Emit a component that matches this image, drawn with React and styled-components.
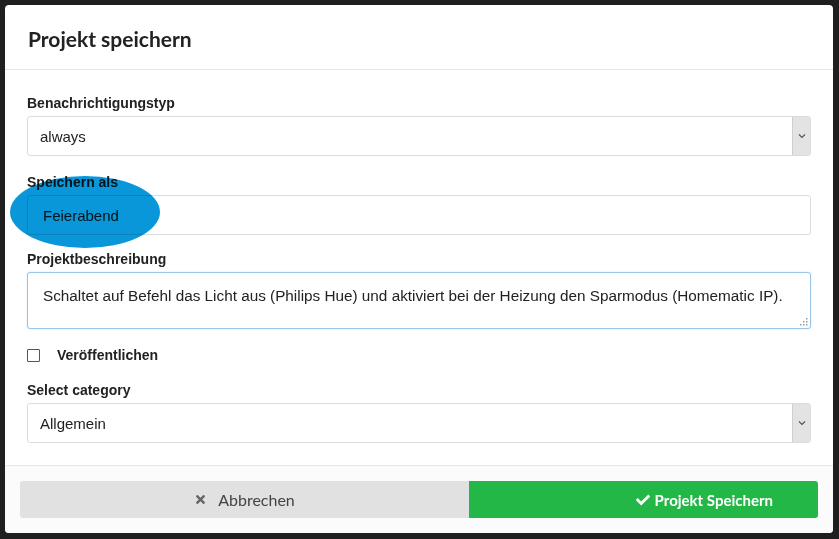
import React from "react";
import styled, { createGlobalStyle } from "styled-components";
import { FaCheck, FaTimes } from "react-icons/fa";

const GlobalStyle = createGlobalStyle`
  html, body {
    margin: 0;
    padding: 0;
    background: #1f1f1f;
  }
  body {
    padding: 5px 6px 6px 5px;
    font-family: "Liberation Sans", Arial, sans-serif;
  }
`;

const Modal = styled.div`
  position: relative;
  width: 828px;
  height: 528px;
  background: #fff;
  border-radius: 4px;
  overflow: hidden;
  display: flex;
  flex-direction: column;
`;

const Header = styled.div`
  height: 65px;
  box-sizing: border-box;
  padding: 0 23px;
  display: flex;
  align-items: center;
  border-bottom: 1px solid #e5e5e5;
`;

const Title = styled.h4`
  margin: 0;
  font-family: Lato, "Open Sans", sans-serif;
  font-weight: 700;
  font-size: 21px;
  color: #222;
  padding-top: 2px;
`;

const Body = styled.div`
  flex: 1;
  padding: 24px 22px 0 22px;
`;

const Group = styled.div`
  margin-bottom: ${(p) => p.gap ?? 17}px;
`;

const Label = styled.div`
  font-weight: 700;
  font-size: 14px;
  line-height: 18px;
  color: #222;
  margin-bottom: 4px;
`;

const Field = styled.div`
  position: relative;
  box-sizing: border-box;
  height: ${(p) => p.h || 40}px;
  border: 1px solid ${(p) => (p.focused ? "#9cc4e4" : "#dcdcdc")};
  border-radius: 3px;
  box-shadow: ${(p) => (p.focused ? "0 0 2px rgba(102,175,233,0.35)" : "none")};
  display: flex;
  align-items: ${(p) => (p.multi ? "flex-start" : "center")};
  padding: ${(p) => (p.multi ? "14px 15px" : `0 0 0 ${p.pad ?? 15}px`)};
  font-size: ${(p) => (p.multi ? "15.3px" : "15px")};
  color: #222;
  background: #fff;
`;

const Value = styled.span`
  flex: 1;
  position: relative;
  z-index: 2;
`;

const ArrowBox = styled.div`
  width: 17px;
  align-self: stretch;
  background: #e3e3e3;
  border-left: 1px solid #cfcfcf;
  display: flex;
  align-items: center;
  justify-content: center;
`;

const Grip = styled.svg`
  position: absolute;
  right: 2px;
  bottom: 2px;
`;

const CheckRow = styled.div`
  display: flex;
  align-items: center;
  gap: 17px;
  margin: 18px 0 18px 0;
`;

const Box = styled.div`
  width: 13px;
  height: 13px;
  box-sizing: border-box;
  border: 1px solid #555;
  border-radius: 1px;
`;

const CheckLabel = styled.span`
  font-weight: 700;
  font-size: 14px;
  color: #222;
`;

const Highlight = styled.div`
  position: absolute;
  left: 5px;
  top: 171px;
  width: 150px;
  height: 72px;
  border-radius: 50%;
  background: #0a97d9;
  mix-blend-mode: multiply;
  z-index: 5;
  pointer-events: none;
`;

const Footer = styled.div`
  border-top: 1px solid #e5e5e5;
  background: #fbfbfb;
  padding: 15px 14px 15px 15px;
  display: flex;
`;

const Button = styled.div`
  flex: 0 0 ${(p) => (p.primary ? 349 : 449)}px;
  box-sizing: border-box;
  height: 37px;
  display: flex;
  align-items: center;
  justify-content: ${(p) => (p.primary ? "flex-end" : "center")};
  padding-right: ${(p) => (p.primary ? "45px" : "0")};
  gap: ${(p) => (p.primary ? "5px" : "11px")};
  font-family: Lato, "Open Sans", sans-serif;
  font-size: ${(p) => (p.primary ? "15px" : "16px")};
  font-weight: ${(p) => (p.primary ? 700 : 400)};
  background: ${(p) => (p.primary ? "#22b746" : "#e1e1e1")};
  color: ${(p) => (p.primary ? "#fff" : "#444")};
  border-radius: ${(p) => (p.primary ? "0 3px 3px 0" : "3px 0 0 3px")};
  svg {
    color: ${(p) => (p.primary ? "#fff" : "#666")};
  }
`;

function Chevron() {
  return (
    <svg width="8" height="6" viewBox="0 0 8 6">
      <path d="M1 1.5 L4 4.5 L7 1.5" fill="none" stroke="#555" strokeWidth="1.2" />
    </svg>
  );
}

function SelectField({ value }) {
  return (
    <Field pad={12}>
      <Value>{value}</Value>
      <ArrowBox>
        <Chevron />
      </ArrowBox>
    </Field>
  );
}

export default function App() {
  return (
    <>
      <GlobalStyle />
      <Modal>
        <Header>
          <Title>Projekt speichern</Title>
        </Header>
        <Body>
          <Group>
            <Label>Benachrichtigungstyp</Label>
            <SelectField value="always" />
          </Group>
          <Group gap={15}>
            <Label>Speichern als</Label>
            <Field>
              <Value>Feierabend</Value>
            </Field>
          </Group>
          <Group gap={0}>
            <Label>Projektbeschreibung</Label>
            <Field h={57} multi focused>
              <Value>
                Schaltet auf Befehl das Licht aus (Philips Hue) und aktiviert bei der Heizung den
                Sparmodus (Homematic IP).
              </Value>
              <Grip width="8" height="8" viewBox="0 0 8 8">
                <g fill="#999">
                  <rect x="6" y="0" width="1.5" height="1.5" />
                  <rect x="3" y="3" width="1.5" height="1.5" />
                  <rect x="6" y="3" width="1.5" height="1.5" />
                  <rect x="0" y="6" width="1.5" height="1.5" />
                  <rect x="3" y="6" width="1.5" height="1.5" />
                  <rect x="6" y="6" width="1.5" height="1.5" />
                </g>
              </Grip>
            </Field>
          </Group>
          <CheckRow>
            <Box />
            <CheckLabel>Veröffentlichen</CheckLabel>
          </CheckRow>
          <Group gap={0}>
            <Label>Select category</Label>
            <SelectField value="Allgemein" />
          </Group>
        </Body>
        <Footer>
          <Button>
            <FaTimes size={13} />
            <span>Abbrechen</span>
          </Button>
          <Button primary>
            <FaCheck size={14} />
            <span>Projekt Speichern</span>
          </Button>
        </Footer>
        <Highlight />
      </Modal>
    </>
  );
}
